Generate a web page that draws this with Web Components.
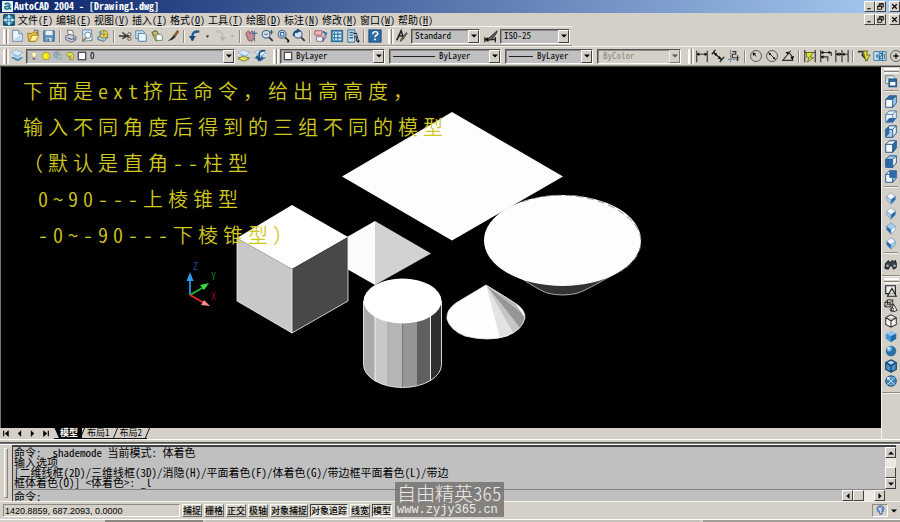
<!DOCTYPE html>
<html lang="zh-CN">
<head>
<meta charset="utf-8">
<title>AutoCAD 2004 - [Drawing1.dwg]</title>
<style>
html,body{margin:0;height:100%}
body{font-family:"Noto Sans CJK SC",sans-serif;font-feature-settings:"hwid";color:#000;background:#d4d0c8;overflow:hidden}
</style>
</head>
<body>
<cad-window>
  <cad-titlebar slot="top">AutoCAD 2004 - [Drawing1.dwg]</cad-titlebar>
  <cad-menubar slot="top" items="文件(F),编辑(E),视图(V),插入(I),格式(O),工具(T),绘图(D),标注(N),修改(M),窗口(W),帮助(H)"></cad-menubar>
  <cad-row slot="top">
    <cad-toolbar items="new,open,save,|,print,preview,publish,|,cut,copy,paste,brush,|,undo,drop,redo,dropoff,|,pan,zoomrt,zoomwin,zoomprev,|,props,design,palette,|,help"></cad-toolbar>
    <cad-toolbar items="textstyle"><cad-combo style="--w:69px" label="文字样式" value="Standard"></cad-combo></cad-toolbar>
    <cad-toolbar items="dimstyle" plain><cad-combo style="--w:70px" label="标注样式" value="ISO-25"></cad-combo></cad-toolbar>
  </cad-row>
  <cad-row slot="top">
    <cad-toolbar items="layers" tight><cad-combo style="--w:209px" label="图层" value="0" icons="bulb,sun,viewport,lock,white"></cad-combo></cad-toolbar>
    <cad-toolbar items="layerset,layerprev" plain></cad-toolbar>
    <cad-toolbar wide><cad-combo style="--w:105px" label="颜色" value="ByLayer" icons="white"></cad-combo>
      <cad-combo style="--w:112px" label="线型" value="ByLayer" line="42"></cad-combo>
      <cad-combo style="--w:88px" label="线宽" value="ByLayer" line="24"></cad-combo>
      <cad-combo style="--w:84px" label="打印样式" value="ByColor" off></cad-combo></cad-toolbar>
    <cad-toolbar items="dimlin,dimali,dimord,|,dimrad,dimdia,dimang,|,qdim,dimbase,dimcont,|,leader,tol,center"></cad-toolbar>
  </cad-row>
  <cad-drawing></cad-drawing>
  <cad-side slot="side"></cad-side>
  <cad-tabs slot="tabs"></cad-tabs>
  <cad-console slot="bottom"></cad-console>
  <cad-status slot="bottom"></cad-status>
  <cad-watermark slot="overlay"></cad-watermark>
</cad-window>
<script>
const define=(name,render)=>customElements.define(name,class extends HTMLElement{
  constructor(){super();this.attachShadow({mode:"open"});}
  connectedCallback(){
    const t=document.createElement("template");
    t.innerHTML=render(this);
    this.shadowRoot.replaceChildren(t.content.cloneNode(true));
  }
});

const page='<path d="M3 1.500h7l4 4V14H3z" fill="#eef6fb" stroke="#5a7f9c"/>';
const box=(t,l,r)=>`<path d="M2 5l4-4h8v8l-4 5H2z" fill="#e8f2fa" stroke="#46749c"/><path d="M2 5l4-4h8l-4 4z" fill="${t}" stroke="#2d5d8e"/><path d="M2 5h8v9H2z" fill="${l}" stroke="#2d5d8e"/><path d="M10 5l4-4v8l-4 5z" fill="${r}" stroke="#2d5d8e"/>`;
const iso=(t,l,r)=>`<path d="M8 2l5 4-5 4-5-4z" fill="${t}"/><path d="M3 6l5 4v5l-5-5z" fill="${l}"/><path d="M13 6l-5 4v5l5-5z" fill="${r}"/><path d="M8 2l5 4v4l-5 5-5-5V6zM3 6l5 4 5-4M8 10v5" fill="none" stroke="#5f8dbb" stroke-width=".7"/>`;
const lens='<circle cx="7" cy="6" r="4.500" fill="#cfe2f1" stroke="#52718f" stroke-width="1.400"/><path d="M10.500 9.500l4 4" stroke="#333" stroke-width="2"/>';
const sheets='<path d="M1 10l6-3 8 3-6 4z" fill="#4f86b5"/><path d="M1 7l6-3 8 3-6 4z" fill="#a4c8e4" stroke="#fff" stroke-width=".6"/><path d="M1 4l6-3 8 3-6 4z" fill="#d8eaf6" stroke="#7098bb" stroke-width=".6"/>';
const B="#2e6aa5",L="#a9cfec",W="#f4faff";
const icons={
 app:'<rect x="0" y="0" width="16" height="16" rx="2" fill="#1b5877"/><circle cx="8" cy="8" r="6" fill="#4d9fc8"/><path d="M8 1v14M1 8h14" stroke="#e8f8ff" stroke-width="2"/><circle cx="8" cy="8" r="3" fill="#19648d"/><path d="M8 5v6M5 8h6" stroke="#fff"/>',
 logo:'<rect x="0" y="0" width="16" height="16" fill="#e4f1f2"/><path d="M4 5q4-3 7 0v7M11 8q-7-1-7 2 2 4 7 0l2 2" fill="none" stroke="#167384" stroke-width="2.400"/>',
 new:page+'<path d="M10 1.500v4h4" fill="#b9d5e8" stroke="#5a7f9c"/><path d="M4 13l8-7v7z" fill="#b9dbef"/>',
 open:'<path d="M2 5h5l2-2 5 2-4 9H3z" fill="#e8c64e" stroke="#957316"/><path d="M4 14l3-7h8l-4 7z" fill="#fff09a" stroke="#987a1e"/><path d="M9 1l5 1-1 4" fill="none" stroke="#555"/>',
 save:'<path d="M2 2h12v12H2z" fill="#5e8fbb" stroke="#36648c"/><path d="M4 2h8v5H4z" fill="#e7f4fb"/><path d="M5 10h6v4H5z" fill="#c5d9e8"/><path d="M6 11h2v3H6z" fill="#335f83"/>',
 print:'<path d="M4 1l6 1 1 6-6-1z" fill="#fff" stroke="#667"/><path d="M2 8l5-2 7 3-1 4-5 2-6-3z" fill="#ccd3df" stroke="#555e78"/><path d="M4 10l5 2" stroke="#425"/><circle cx="11" cy="11" r="1.500" fill="#5d779d"/>',
 preview:'<path d="M3 1h10l1 12-11 1z" fill="#d5e8f5" stroke="#61829d"/><circle cx="9" cy="7" r="3.500" fill="#fff" stroke="#527898"/><path d="M7 10l-4 4" stroke="#a26c30" stroke-width="2"/>',
 publish:'<path d="M2 9l6-3 6 3-5 5-7-2z" fill="#a9c8dd" stroke="#46698b"/><circle cx="9" cy="6" r="4.500" fill="#f0df5d" stroke="#927c22"/><path d="M5 6h8M9 2v8" stroke="#8b822d"/><circle cx="5" cy="4" r="2" fill="#6e9ec3"/>',
 cut:'<path d="M1 8h8M5 4l8 6M5 11l7-4" stroke="#333" stroke-width="1.500"/><circle cx="13" cy="6" r="2" fill="none" stroke="#555"/><circle cx="13" cy="11" r="2" fill="none" stroke="#555"/>',
 copy:'<path d="M2 2h8l2 2v7H2z" fill="#cbe2f1" stroke="#56809f"/><path d="M5 5h7l2 2v7H5z" fill="#e8f5fc" stroke="#3f7299"/>',
 paste:'<path d="M2 4l5-2 6 8-6 4z" fill="#d5c16d" stroke="#756d35"/><circle cx="6" cy="5" r="3" fill="none" stroke="#57733b"/><path d="M7 6h5l2 2v5H7z" fill="#fff" stroke="#5b8d59"/>',
 brush:'<path d="M14 2l-5 7" stroke="#855b32" stroke-width="3"/><path d="M9 7L2 14l6-2 3-3z" fill="#333"/>',
 undo:'<path d="M13 3Q5 2 5 8v5" fill="none" stroke="#225b8d" stroke-width="2.600"/><path d="M1 8h8l-4 6z" fill="#174a78"/>',
 redo:'<path d="M3 3q8-1 8 5v5" fill="none" stroke="#c4c0b4" stroke-width="2.600"/><path d="M7 9h8l-4 5z" fill="#b9b5aa"/>',
 drop:'<path d="M5 6h6l-3 4z" fill="#222"/>',
 dropoff:'<path d="M5 6h6l-3 4z" fill="#aaa69c"/>',
 pan:'<path d="M2 5l3-3 2 3 2-3 2 3 1 4-3 5-4-1z" fill="#c58b93" stroke="#8b4e61"/><path d="M12 2v6M9 5h6M12 10v4" stroke="#47749a" stroke-width="1.300"/>',
 zoomrt:lens+'<path d="M13 1v5M10.500 3.500h5M5 6h4" stroke="#345"/>',
 zoomwin:lens+'<path d="M5 4h4v4H5z" fill="none" stroke="#24527a"/><path d="M12 15l3-3v3z"/>',
 zoomprev:lens+'<path d="M2 8q-1-6 6-6l-2-2M8 2L5 4" fill="none" stroke="#1d4c77" stroke-width="2"/>',
 props:'<path d="M1 2h8v5H1z" fill="#f1bcbc" stroke="#9c5364"/><path d="M3 9h7v5H3z" fill="#fff" stroke="#875a8a"/><path d="M10 3l4 2-4 9" fill="none" stroke="#386f9d" stroke-width="2"/><circle cx="13" cy="9" r="2" fill="#c494aa"/>',
 design:'<path d="M1 1h14v14H1z" fill="#2e6c9b"/><path d="M3 3h10v10H3z" fill="#d8edf8"/><path d="M5 3v10M9 3v10M3 6h10M3 10h10" stroke="#3f84ae" stroke-width="1.500"/>',
 palette:'<path d="M2 1h8v14H2z" fill="#c8e1ef" stroke="#2b648d"/><path d="M4 4h4M4 7h4M4 10h4" stroke="#2b648d" stroke-width="1.500"/><path d="M8 5h4l2 8M9 9h3v5" fill="none" stroke="#345" stroke-width="1.200"/><path d="M12 13h4l-2 3z"/>',
 help:'<rect x="1" y="1" width="14" height="14" fill="#2a6ba8" stroke="#164774"/><path d="M5.500 6q0-3 3-3t2.500 3q-3 1.500-3 3.500" fill="none" stroke="#fff" stroke-width="1.700"/><circle cx="8" cy="12" r="1.100" fill="#fff"/>',
 textstyle:'<path d="M2 13L7 2l3 9M4 8h5" fill="none" stroke="#222" stroke-width="1.800"/><path d="M14 5l-6 8-2 1 1-3 6-7z" fill="#8b744b" stroke="#222" stroke-width=".7"/>',
 dimstyle:'<path d="M1 12h12M1 9v6M13 9v6" stroke="#222" stroke-width="1.500"/><path d="M1 12l4-3v6z"/><path d="M15 2L6 10l-2 3 5-1 5-7z" fill="#666" stroke="#222"/>',
 layers:sheets,
 layerset:sheets+'<path d="M1 11l6-3 7 3-6 3z" fill="#e6dc54" stroke="#6d7d38"/>',
 layerprev:sheets+'<path d="M14 2Q6 1 7 8v5M4 8l3 5 4-4" fill="none" stroke="#214e80" stroke-width="2"/>',
 bulb:'<path d="M6 2h4l2 3-2 5H6L4 5z" fill="#fffccd" stroke="#a69e67"/><path d="M6 11h4v3H6z" fill="#717170"/>',
 sun:'<circle cx="8" cy="8" r="6" fill="#f4ec1b" stroke="#837d24"/>',
 viewport:'<circle cx="6" cy="6" r="5" fill="#9eafb5" stroke="#7c8c91"/><path d="M7 6h7v7H7z" fill="#bdcbd0" stroke="#8496a3"/><path d="M5 3l8 10" stroke="#7d8f9e"/>',
 lock:'<path d="M2 6l3-4 7 1 2 5-1 6H7V8H3z" fill="#e4e34d" stroke="#77772d"/><path d="M9 7v6" stroke="#756f20"/>',
 white:'<path d="M2 2h12v12H2z" fill="#fff" stroke="#111" stroke-width="1.500"/>',
 dimlin:'<path d="M2 2v13M14 2v13M2 6h12" fill="none" stroke="#333" stroke-width="1.300"/><path d="M2 6l3-2v4zM14 6l-3-2v4z"/>',
 dimali:'<path d="M3 4l9 8M1 6l4-5M10 15l5-6" stroke="#222" stroke-width="1.500"/><path d="M3 4l4 1-2 3zM12 12l-4-1 2-3z"/>',
 dimord:'<path d="M4 1v14M1 12h13" stroke="#5c7e98" stroke-width="1.300" stroke-dasharray="2 1"/><path d="M6 3h4v3H6v4h4M12 7v7M9 10h5" fill="none" stroke="#333" stroke-width="1.300"/>',
 dimrad:'<circle cx="8" cy="8" r="6.300" fill="none" stroke="#555" stroke-width="1.100"/><path d="M8.500 8.500L5 5" stroke="#111"/><path d="M4 4l4 1-3 3z"/>',
 dimdia:'<circle cx="8" cy="8" r="6.300" fill="none" stroke="#555" stroke-width="1.100"/><path d="M4 4l8 8" stroke="#111"/><path d="M4 4l3 1-2 2zM12 12l-1-3-2 2z"/>',
 dimang:'<path d="M14 13H2L11 2M6 4q7 1 7 8" fill="none" stroke="#333" stroke-width="1.300"/><path d="M5 4l4-1-1 3zM13 13l-2-4 4-1z"/>',
 qdim:'<path d="M2 1v14M14 1v14M2 4h12M8 4v8" fill="none" stroke="#333" stroke-width="1.300"/><path d="M4 4h8L8 9l4 1-7 5 2-5-3-1z" fill="#dde42e" stroke="#656c17"/>',
 dimbase:'<path d="M2 1v14M2 4h12v4M2 9h8v5" fill="none" stroke="#333" stroke-width="1.300"/><path d="M2 4l3-2v4zM14 4l-3-2v4zM2 9l3-2v4z"/>',
 dimcont:'<path d="M1 1v14M8 1v14M15 1v14M1 6h14" stroke="#333" stroke-width="1.300"/><path d="M1 6l3-2v4zM8 6L5 4v4zM8 6l3-2v4z"/>',
 leader:'<path d="M1 3h7l-2 4 6 6" fill="none" stroke="#333" stroke-width="2"/><path d="M7 3l5-1-1 5h4l-5 7-1-5z" fill="#dde42e" stroke="#656c17"/>',
 tol:'<path d="M1 3h14v10H1z" fill="#dceef8" stroke="#286c9b"/><path d="M7 3v10M11 3v10M3 8h3M4.500 5v6M8 5h2v3H8v3h2M13 5v6" fill="none" stroke="#286c9b" stroke-width="1.200"/>',
 center:'<circle cx="8" cy="8" r="6.300" fill="none" stroke="#555"/><path d="M8 5v6M5 8h6" stroke="#111" stroke-width="1.500"/>',
 views:'<path d="M2 2h8l2 2v2M2 2v9h3" fill="#eef6fb" stroke="#546f85"/><path d="M6 6h8v8H6z" fill="#fff" stroke="#235d8c" stroke-width="2"/><path d="M6 8h8" stroke="#235d8c" stroke-width="2"/>',
 vtop:box(B,W,L),vbot:'<path d="M2 5l4-4h8v8l-4 5H2zM2 5h8v9M10 5l4-4" fill="#e8f2fa" stroke="#46749c"/><path d="M2 14l4-5h8l-4 5z" fill="#2e6aa5"/>',
 vleft:box(W,L,W)+'<path d="M2 5l4-4v9l-4 4z" fill="#2e6aa5"/>',vright:box(W,W,B),vfront:box(L,B,W),vback:box(W,W,L)+'<path d="M6 1h8v8H6z" fill="#2e6aa5"/>',
 sw:iso(W,L,B),se:iso(W,L,B),ne:iso(L,B,W),nw:iso(W,B,L),
 camera:'<path d="M2 7l3-3 2 3 2-3 2 1 2-1 1 3v5l-3 2-2-4H7l-2 4-4-1z" fill="#38424c" stroke="#111"/><circle cx="4" cy="10" r="1.500" fill="#a5b5c0"/><circle cx="12" cy="10" r="1.500" fill="#a5b5c0"/>',
 wire2:'<path d="M2 2h11v9H2z" fill="#eee" stroke="#222" stroke-width="1.300"/><path d="M9 5l5 9H4z" fill="#eee" fill-opacity=".7" stroke="#222" stroke-width="1.300"/>',
 wire3:'<path d="M1 4l3-3h6v6L7 9H1zM1 4h6v5M7 4l3-3M4 1v5h6M4 6L1 9" fill="none" stroke="#222"/><path d="M11 6l4 7q-4 3-7 0z" fill="#eee" stroke="#222"/><circle cx="9" cy="12" r="2" fill="none" stroke="#222"/>',
 hidden:'<path d="M8 1l6 3v8l-6 3-6-3V4zM2 4l6 4 6-4M8 8v7" fill="#fafafa" stroke="#333" stroke-width="1.200"/>',
 flat:'<path d="M2 5l7-3 5 3-6 3z" fill="#8cc7f0"/><path d="M2 5l6 3v7l-6-4z" fill="#4796d4"/><path d="M8 8l6-3v6l-6 4z" fill="#2269a9"/>',
 gouraud:'<circle cx="8" cy="8" r="6" fill="#2c70a8"/><circle cx="6" cy="5.500" r="3" fill="#7cb9e0"/><circle cx="5.500" cy="5" r="1.200" fill="#e0f3fd"/>',
 flate:'<path d="M8 1l6 3v8l-6 3-6-3V4z" fill="#4c93c9" stroke="#123d65" stroke-width="1.300"/><path d="M2 4l6 4 6-4M8 8v7" fill="none" stroke="#123d65" stroke-width="1.300"/><path d="M4 4l4-2 4 2-4 2z" fill="#b4daf2"/>',
 goure:'<circle cx="8" cy="8" r="6" fill="#3f86bd" stroke="#1e527f" stroke-width="1.300"/><path d="M4 4l8 8M12 4l-8 8" fill="none" stroke="#e0eff9"/><path d="M3 6q5-4 10 0M3 10q5 4 10 0" fill="none" stroke="#a9d0ea" stroke-width=".7"/><circle cx="5" cy="5" r="1.500" fill="#eef"/>',
 comm:'<circle cx="8" cy="6" r="5" fill="#7694ca" stroke="#3c568f"/><path d="M5 4l5 4M10 3L5 8M8 8v5M3 14h10" stroke="#e8f0ff" stroke-width="1.400"/><path d="M6 12h5v2H6z" fill="#445b93"/>',
 min:'<path d="M4 12h6" stroke="#000" stroke-width="2"/>',
 restore:'<path d="M6 6V3h7v6h-3M3 7h7v6H3z" fill="none" stroke="#000" stroke-width="1.500"/><path d="M6 3.500h7M3 7.500h7" stroke="#000" stroke-width="2"/>',
 close:'<path d="M4 4l8 8M12 4l-8 8" stroke="#000" stroke-width="2"/>',
 up:'<path d="M2 11h12L8 5z"/>',down:'<path d="M2 5h12l-6 6z"/>',
 left:'<path d="M11 2v12L5 8z"/>',right:'<path d="M5 2v12l6-6z"/>',
 first:'<path d="M3 3v10" stroke="#000" stroke-width="2"/><path d="M12 2v12L5 8z"/>',
 last:'<path d="M13 3v10" stroke="#000" stroke-width="2"/><path d="M4 2v12l7-6z"/>'
};
const names={min:"最小化",restore:"还原",close:"关闭",new:"新建",open:"打开",save:"保存",print:"打印",undo:"放弃",redo:"重做",help:"帮助"};
define("cad-icon",e=>`<style>:host{display:block;width:14px;height:14px;flex:none}svg{display:block;width:100%;height:100%}</style><svg viewBox="0 0 16 16" aria-hidden="true">${icons[e.getAttribute("name")]}</svg>`);

const face="border:1px solid;border-color:#fff #404040 #404040 #fff;background:#d4d0c8;";
const winButtons=`<div class="wb">${["min","restore","close"].map(n=>`<button aria-label="${names[n]}"><cad-icon name="${n}"></cad-icon></button>`).join("")}</div>`;
const winCss=`.wb{margin-left:auto;display:flex}.wb button{${face}box-sizing:border-box;width:11px;height:11px;padding:0;display:grid;place-items:center}.wb button:nth-child(2){margin-right:3px}.wb cad-icon{width:9px;height:9px}`;

define("cad-window",()=>`<style>
:host{position:relative;display:flex;flex-direction:column;height:100vh;min-height:360px;overflow:hidden;background:#d4d0c8}
.mid{flex:1;min-height:0;display:flex;border-top:1px solid #404040}
.left{flex:1;min-width:0;display:flex;flex-direction:column}
</style><slot name="top"></slot><div class="mid"><div class="left"><slot></slot><slot name="tabs"></slot></div><slot name="side"></slot></div><slot name="bottom"></slot><slot name="overlay"></slot>`);

define("cad-titlebar",()=>`<style>
:host{display:flex;align-items:center;height:13px;gap:1px;padding-left:2px;background:linear-gradient(90deg,#0a246a,#a6caf0);color:#fff;font-size:10px;line-height:12px;font-weight:700;white-space:pre}
span{align-self:flex-start}
.logo{width:11px;height:11px}${winCss}
</style><cad-icon class="logo" name="logo"></cad-icon><span><slot></slot></span>${winButtons}`);

define("cad-menubar",e=>`<style>
:host{display:flex;align-items:center;height:13px;padding-left:3px;font-size:10px;line-height:13px}
.app{width:12px;height:12px}
nav{display:flex;gap:3px;padding-left:3px}
nav button{all:unset;white-space:nowrap;font-weight:400}u{text-underline-offset:1px}${winCss}
</style><cad-icon class="app" name="app"></cad-icon><nav>${e.getAttribute("items").split(",").map(t=>`<button>${t.replace(/\((.)\)/,"(<u>$1</u>)")}</button>`).join("")}</nav>${winButtons}`);

define("cad-row",()=>`<style>:host{display:flex;height:20px;overflow:hidden}</style><slot></slot>`);

const button=n=>n==="|"?"<i></i>":`<button class="${n.startsWith("drop")?"narrow":""}" aria-label="${names[n]||n}"><cad-icon name="${n}"></cad-icon></button>`;
define("cad-toolbar",e=>`<style>
:host{display:flex;flex:none;align-items:center;box-sizing:border-box;height:20px;padding:0 2px 0 3px;border-top:1px solid #f4f2ee;border-bottom:1px solid #9a968e}
:host([plain]){padding-left:1px}
:host([tight]){padding-right:0}
:host([wide]){padding-right:4px}
.grip{width:1px;height:15px;border-left:2px solid #fff;border-right:1px solid #85817a;margin-right:2px;box-shadow:2px 0 #f4f2ee}
:host([plain]) .grip{display:none}
button{all:unset;width:16px;height:18px;display:grid;place-items:center}
.narrow{width:9px}.narrow cad-icon{width:9px;height:9px}
i{width:1px;height:13px;margin:0 2px;background:#8e8a82;border-right:1px solid #f4f2ee}
::slotted(cad-combo){margin-left:1px}
::slotted(cad-combo~cad-combo){margin-left:4px}
:host([wide]) ::slotted(cad-combo:not(:first-child)){margin-left:4px}
</style><div class="grip"></div>${(e.getAttribute("items")||"").split(",").filter(Boolean).map(button).join("")}<slot></slot>`);

define("cad-combo",e=>`<style>
:host{display:flex;align-items:center;box-sizing:border-box;width:var(--w);height:15px;border:1px solid;border-color:#55534f #fff #fff #55534f;box-shadow:inset 1px 1px #8d8d8d;background:#c0c0c0;padding-left:2px}
:host([off]){background:#d4d0c8;padding-left:4px}
select{all:unset;flex:1;min-width:0;font-size:9px;line-height:12px;padding-left:1px;white-space:nowrap}
:host([off]) select{color:#8b8881}
.line{height:1px;background:#222;margin:0 3px 0 1px}
.ic{width:10px;height:10px;margin-right:2px}
.arrow{${face}box-sizing:border-box;width:11px;height:13px;display:grid;place-items:center}
.arrow cad-icon{width:8px;height:8px}
:host([off]) .arrow{opacity:.6}
</style>${(e.getAttribute("icons")||"").split(",").filter(Boolean).map(n=>`<cad-icon class="ic" name="${n}"></cad-icon>`).join("")}${e.hasAttribute("line")?`<div class="line" style="width:${e.getAttribute("line")}px"></div>`:""}<select aria-label="${e.getAttribute("label")}" ${e.hasAttribute("off")?"disabled":""}><option>${e.getAttribute("value")}</option></select><span class="arrow"><cad-icon name="down"></cad-icon></span>`);

define("cad-drawing",()=>`<style>
:host{position:relative;display:block;flex:1;min-height:0;background:#000;border-left:1px solid #77736c;overflow:hidden}
svg{position:absolute;inset:0;width:100%;height:100%}
svg text{font-size:10px;font-weight:300}
.note{position:relative;margin:0;padding:6px 22px;font-size:20px;line-height:36px;letter-spacing:5px;font-weight:350;white-space:pre;color:#d0c81e}
.full{font-feature-settings:normal}
</style>
<svg viewBox="1 67 880 360" preserveAspectRatio="xMinYMin meet" role="img" aria-label="三维模型">
<path d="M452 112l111 64.500-111 64-110-64z" fill="#fdfdfd"/>
<path d="M375 221v64l-28-16v-32z" fill="#fcfcfc"/><path d="M375 221l56 32.500-56 31.500z" fill="#d2d2d2"/>
<path d="M292 205l56 32-56 32-55-31z" fill="#fff"/><path d="M237 238l55 31v64l-55-32z" fill="#c8c8c8"/><path d="M348 237l-56 32v64l56-32z" fill="#484848"/>
<path d="M237 238v63l55 32 56-32v-64M292 269v64" fill="none" stroke="#f2f2f2" stroke-width=".8"/>
<clipPath id="cyl"><path d="M363.500 301v63.500a39 23 0 0 0 78 0V301z"/></clipPath>
<g clip-path="url(#cyl)"><path d="M363 300h12v90h-12z" fill="#aaa"/><path d="M375 300h12v90h-12z" fill="#c8c8c8"/><path d="M387 300h15.500v90H387z" fill="#b5b5b5"/><path d="M402.500 300H417v90h-14.500z" fill="#969696"/><path d="M417 300h13.500v90H417z" fill="#606060"/><path d="M430.500 300H442v90h-11.500z" fill="#303030"/><path d="M375 300v90M430.500 300v90" stroke="#eee"/></g>
<path d="M363.500 301v63.500a39 23 0 0 0 78 0V301" fill="none" stroke="#eee" stroke-width=".9"/>
<ellipse cx="402.500" cy="301" rx="39" ry="22.500" fill="#fff"/>
<path d="M519 277q20 13 28 16 16 4 31 0 9-3 38-20z" fill="#333" stroke="#ccc" stroke-width=".8"/>
<ellipse cx="562.500" cy="240.500" rx="78.500" ry="45.500" fill="#fdfdfd"/>
<path d="M522 202q40-14 82 1 38 17 37 40-1 16-20 29" fill="none" stroke="#777" stroke-width=".8" stroke-dasharray="7 4"/>
<path d="M486 285l-30 18q-10 7-9 16 3 11 18 17 24 6 42 0 15-6 18-18 0-9-10-15z" fill="#fefefe"/>
<path d="M486 285l14 53 13-5z" fill="#e3e3e3"/><path d="M486 285l27 48 7-5z" fill="#c6c6c6"/><path d="M486 285l34 43 5-10-4-6z" fill="#969696"/><path d="M486 285l35 27-6-9-9-6z" fill="#b6b6b6"/>
<path d="M486 285l-30 18q-10 7-9 16 3 11 18 17 24 6 42 0 15-6 18-18 0-9-10-15z" fill="none" stroke="#eee" stroke-width=".8"/>
<path d="M190 295v-17" stroke="#2186db" stroke-width="2"/><path d="M186.500 281l3.500-9 3.500 9z" fill="#2d9df0"/>
<path d="M190 295l14-8" stroke="#21b530" stroke-width="2"/><path d="M209 283l-5 7-4-5z" fill="#3ddb43"/>
<path d="M190 295l14 8" stroke="#e2292c" stroke-width="2"/><path d="M210 306l-9-1 3-5z" fill="#ff8989"/>
<text x="193" y="270" fill="#266fc4">Z</text><text x="211" y="280" fill="#2daa35">Y</text><text x="211" y="300" fill="#b61c22">X</text>
</svg><p class="note">下面是ext挤压命令<span class="full">，</span>给出高高度<span class="full">，</span>
输入不同角度后得到的三组不同的模型
<span class="full">（</span>默认是直角--柱型
 0~90---上棱锥型
 -0~-90---下棱锥型<span class="full">）</span></p>`);

define("cad-side",()=>`<style>
:host{display:flex;flex-direction:column;align-items:center;box-sizing:border-box;width:19px;border-left:1px solid #f4f2ee;background:#d4d0c8;overflow:hidden}
.grip{width:15px;height:1px;flex:none;border-top:2px solid #fff;border-bottom:1px solid #85817a;box-shadow:0 2px #f4f2ee;margin:1px 0}
button{all:unset;width:18px;height:15px;flex:none;display:grid;place-items:center}
i{width:14px;height:1px;flex:none;margin:2px 0;background:#8e8a82;border-bottom:1px solid #f4f2ee}
.end{width:100%;margin:4px 0 0}
</style><div class="grip"></div>${"views,|,vtop,vbot,vleft,vright,vfront,vback,|,sw,se,ne,nw,|,camera".split(",").map(button).join("")}<i class="end"></i><div class="grip"></div>${"wire2,wire3,hidden,flat,gouraud,flate,goure".split(",").map(button).join("")}<i class="end"></i>`);

define("cad-tabs",()=>`<style>
:host{display:flex;height:11px;font-size:9px;line-height:10px;padding-left:1px}
.nav{display:flex;gap:3px;margin-right:4px}
button{all:unset;display:grid;place-items:center;white-space:nowrap}
.nav button{width:10px}.nav cad-icon{width:9px;height:9px}
.tab{position:relative;height:10px;padding:0 5px;border-bottom:1px solid #111}
.tab::after{content:"";position:absolute;right:-1px;top:0;width:1px;height:10px;background:#111;transform:skewX(-22deg)}
.on{background:linear-gradient(66deg,transparent 4px,#000 5px);color:#fff;font-weight:700;padding:0 4px 0 6px}
</style><div class="nav">${["first","left","right","last"].map(n=>`<button aria-label="${n}"><cad-icon name="${n}"></cad-icon></button>`).join("")}</div><button class="tab on">模型</button><button class="tab">布局1</button><button class="tab">布局2</button>`);

define("cad-console",()=>`<style>
:host{display:flex;flex-direction:column;border-top:1px solid #fff;font-size:11px;line-height:10px}
.rule{height:1px;margin-top:2px;background:#505050;border-bottom:1px solid #777;box-shadow:0 1px #fff}
.body{display:flex;margin-top:1px;padding-right:4px}
.grip{width:2px;margin:3px 4px 3px 4px;border:1px solid;border-color:#fff #85817a #85817a #fff}
.panel{flex:1;min-width:0;display:grid;grid-template-columns:1fr 11px;border-left:1px solid #404040;border-top:2px solid #404040;background:#c0c0c0}
pre{margin:0;height:42px;padding:0 2px 0 1px;font:inherit;font-feature-settings:inherit}
.bar{display:flex;background:#ece9e4}
.v{flex-direction:column}.thumb,.bar button{${face}box-sizing:border-box;width:11px;height:11px;padding:0;display:grid;place-items:center}
.bar cad-icon{width:8px;height:8px}
.v .thumb{margin-top:auto}
.prompt{display:flex;border-top:1px solid #858585;padding-left:1px;height:11px;align-items:center}
input{all:unset;flex:1;min-width:0}
.corner{background:#d4d0c8}
.h .last{margin-left:10px}
</style><div class="rule"></div><div class="body"><div class="grip"></div><div class="panel">
<pre>命令: _shademode 当前模式: 体着色
输入选项
[二维线框(2D)/三维线框(3D)/消隐(H)/平面着色(F)/体着色(G)/带边框平面着色(L)/带边
框体着色(O)] &lt;体着色&gt;: _l</pre>
<div class="bar v"><button aria-label="向上"><cad-icon name="up"></cad-icon></button><span class="thumb"></span><button aria-label="向下"><cad-icon name="down"></cad-icon></button></div>
<div class="prompt"><label for="cmd">命令:</label><input id="cmd"><div class="bar h"><button aria-label="向左"><cad-icon name="left"></cad-icon></button><span class="thumb"></span><button class="last" aria-label="向右"><cad-icon name="right"></cad-icon></button></div></div><div class="corner"></div>
</div></div>`);

define("cad-status",()=>`<style>
:host{display:flex;flex-direction:column;border-top:1px solid #f4f2ee}
.bar{display:flex;align-items:center;height:17px;gap:2px;padding:0 2px 0 3px;font-size:9px}
output{box-sizing:border-box;width:177px;height:13px;line-height:12px;padding-left:1px;border:1px solid;border-color:#8d8982 #fff #fff #8d8982;font-family:"Liberation Sans",sans-serif}
button{font:inherit;font-weight:500;line-height:10px;box-sizing:border-box;height:13px;padding:0;white-space:nowrap;border:1px solid;border-color:#fff #6d6a64 #6d6a64 #fff;background:#d4d0c8;color:#000}
.on{border-color:#404040 #fff #fff #404040;background:#e6e3dd}
.tray{margin-left:auto;width:16px;border-color:#8d8982 #fff #fff #8d8982;display:grid;place-items:center}
.tray cad-icon{width:11px;height:11px}.more{width:8px;height:8px}
.task{height:2px;display:flex;border-top:1px solid #fff}
.task i{height:2px;background:#8b8780;margin-left:3px}
</style><div class="bar"><output>1420.8859, 687.2093, 0.0000</output>${["捕捉","栅格","正交","极轴","对象捕捉","对象追踪","线宽","模型"].map(t=>`<button class="${t==="对象追踪"||t==="模型"?"on":""}">${t}</button>`).join("")}<button class="tray" aria-label="通信中心"><cad-icon name="comm"></cad-icon></button><cad-icon class="more" name="down"></cad-icon></div><div class="task"><i style="flex:1;opacity:0"></i><i style="flex:1"></i><i style="flex:5;opacity:.2"></i><i style="flex:2;opacity:.7"></i></div>`);

define("cad-watermark",()=>`<style>
:host{position:absolute;left:395px;bottom:5px;display:block;width:max-content;padding:0 2px;background:rgba(112,110,107,.8);color:#ecebe8;font-size:19px;line-height:21px;font-weight:300}
div+div{font-family:"Liberation Mono",monospace;font-size:12px;line-height:14px;font-weight:400}
</style><div>自由精英365</div><div>www.zyjy365.cn</div>`);
</script>
</body>
</html>
